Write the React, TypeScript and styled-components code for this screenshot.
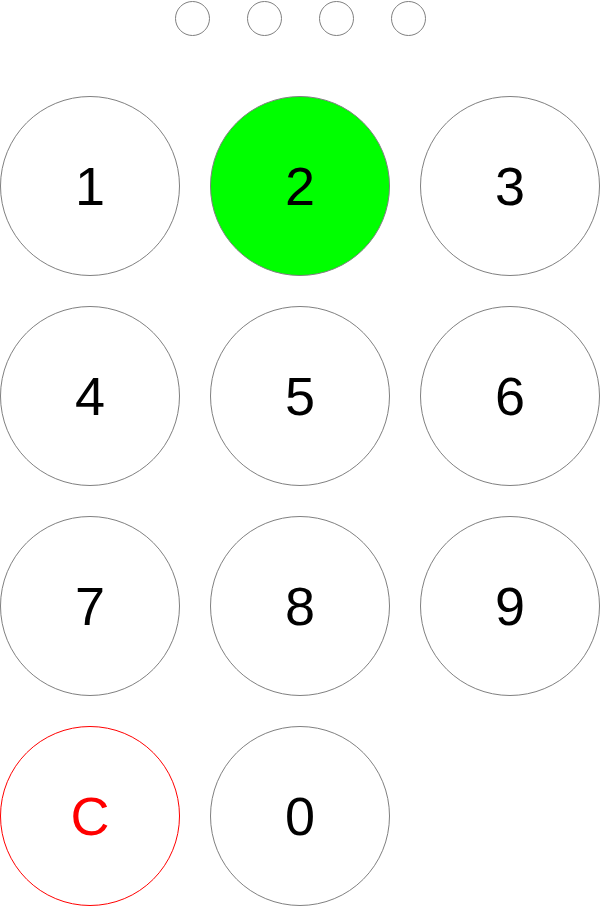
import styled, { createGlobalStyle } from "styled-components";

const GlobalStyle = createGlobalStyle`
  html, body {
    margin: 0;
    padding: 0;
    background: #fff;
  }
  body {
    font-family: "Liberation Sans", Arial, sans-serif;
  }
`;

type KeyKind = "normal" | "active" | "clear";

const StyledWrapper = styled.div`
  width: 600px;
  height: 906px;
  display: flex;
  flex-direction: column;
  align-items: center;
  overflow: hidden;
`;

const StyledDots = styled.div`
  display: flex;
  gap: 37px;
  padding-top: 1px;
  margin-bottom: 60px;
`;

const StyledDot = styled.div<{ filled: boolean }>`
  box-sizing: border-box;
  width: 35px;
  height: 35px;
  border-radius: 50%;
  border: 1.5px solid #808080;
  background: ${({ filled }) => (filled ? "#808080" : "transparent")};
`;

const StyledPad = styled.div`
  display: grid;
  grid-template-columns: repeat(3, 180px);
  grid-auto-rows: 180px;
  gap: 30px;
`;

const StyledKey = styled.button<{ kind: KeyKind }>`
  box-sizing: border-box;
  width: 180px;
  height: 180px;
  border-radius: 50%;
  padding: 0;
  font-family: "Liberation Sans", Arial, sans-serif;
  font-size: 54px;
  line-height: 1;
  display: flex;
  align-items: center;
  justify-content: center;
  cursor: pointer;
  border: 1px solid
    ${({ kind }) => (kind === "clear" ? "#ff0000" : "#808080")};
  color: ${({ kind }) => (kind === "clear" ? "#ff0000" : "#000")};
  background: ${({ kind }) => (kind === "active" ? "#00ff00" : "#fff")};
`;

const keys = ["1", "2", "3", "4", "5", "6", "7", "8", "9", "C", "0"];

export default function App() {
  const entered = 0;
  const activeKey = "2";

  return (
    <>
      <GlobalStyle />
      <StyledWrapper>
        <StyledDots>
          {[0, 1, 2, 3].map((i) => (
            <StyledDot key={i} filled={i < entered} />
          ))}
        </StyledDots>
        <StyledPad>
          {keys.map((k) => (
            <StyledKey
              key={k}
              kind={k === "C" ? "clear" : k === activeKey ? "active" : "normal"}
            >
              {k}
            </StyledKey>
          ))}
        </StyledPad>
      </StyledWrapper>
    </>
  );
}
